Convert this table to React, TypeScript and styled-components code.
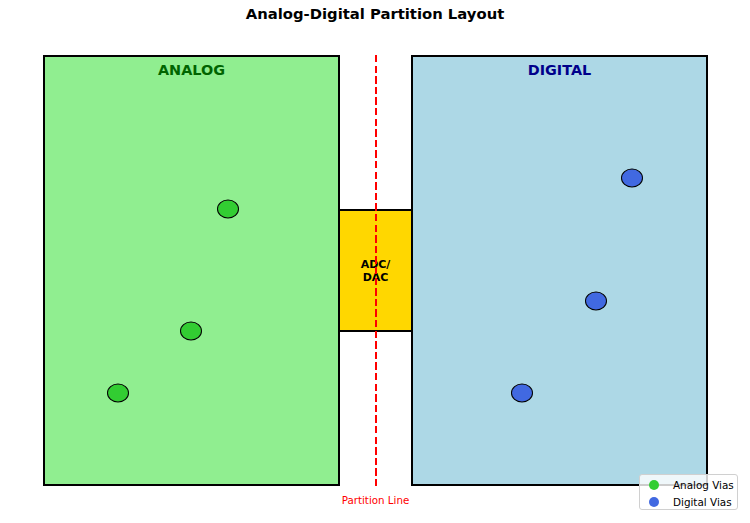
import React from 'react';
import styled, { createGlobalStyle } from 'styled-components';

const GlobalStyle = createGlobalStyle`
  html, body {
    margin: 0;
    padding: 0;
    background: #ffffff;
    font-family: 'DejaVu Sans', 'Liberation Sans', sans-serif;
  }
`;

const Page = styled.div`
  position: relative;
  width: 750px;
  height: 523px;
  display: flex;
  flex-direction: column;
  background: #ffffff;
  overflow: hidden;
`;

const Title = styled.h1`
  margin: 0;
  height: 28px;
  line-height: 28px;
  font-size: 14.8px;
  font-weight: bold;
  text-align: center;
  color: #000;
`;

const Board = styled.div`
  display: flex;
  margin: 27px 0 0 43px;
  height: 431px;
`;

const Panel = styled.div<{ $bg: string }>`
  position: relative;
  box-sizing: border-box;
  width: 297px;
  height: 100%;
  border: 2px solid #000;
  background: ${(p) => p.$bg};
  display: flex;
  flex-direction: column;
  align-items: center;
`;

const PanelLabel = styled.div<{ $color: string }>`
  padding-top: 4px;
  font-size: 14.4px;
  line-height: 18px;
  font-weight: bold;
  color: ${(p) => p.$color};
`;

const Via = styled.span<{ $fill: string }>`
  position: absolute;
  width: 22px;
  height: 19px;
  box-sizing: border-box;
  border: 1px solid #000;
  border-radius: 50%;
  background: ${(p) => p.$fill};
  transform: translate(-50%, -50%);
`;

const Gap = styled.div`
  position: relative;
  width: 71px;
  height: 100%;
  display: flex;
  flex-direction: column;
  justify-content: center;
`;

const Converter = styled.div`
  box-sizing: border-box;
  height: 123px;
  border-top: 2px solid #000;
  border-bottom: 2px solid #000;
  background: #ffd700;
  display: flex;
  align-items: center;
  justify-content: center;
  text-align: center;
  font-size: 11px;
  line-height: 13px;
  font-weight: bold;
  color: #000;
`;

const PartitionLine = styled.div`
  position: absolute;
  top: 0;
  bottom: 0;
  left: 50%;
  width: 2px;
  transform: translateX(-50%);
  background: repeating-linear-gradient(
    to bottom,
    #ff0000 0,
    #ff0000 7.4px,
    transparent 7.4px,
    transparent 10.6px
  );
`;

const Caption = styled.div`
  margin: 8px 0 0 43px;
  width: 665px;
  text-align: center;
  font-size: 10.3px;
  line-height: 12px;
  color: #ff0000;
`;

const Legend = styled.div`
  position: absolute;
  left: 639px;
  top: 474px;
  box-sizing: border-box;
  width: 99px;
  height: 36px;
  padding-top: 1px;
  border: 1px solid #d0d0d0;
  border-radius: 3px;
  background: rgba(255, 255, 255, 0.8);
`;

const LegendRow = styled.div`
  display: flex;
  align-items: center;
  height: 17px;
  padding-left: 9px;
  font-size: 10.4px;
  color: #000;
`;

const Dot = styled.span<{ $fill: string }>`
  width: 10px;
  height: 10px;
  border-radius: 50%;
  background: ${(p) => p.$fill};
  margin-right: 14px;
`;

const ANALOG_VIAS = [
  { x: 183, y: 152 },
  { x: 146, y: 274 },
  { x: 73, y: 336 },
];

const DIGITAL_VIAS = [
  { x: 219, y: 121 },
  { x: 183, y: 244 },
  { x: 109, y: 336 },
];

const App = () => (
  <>
    <GlobalStyle />
    <Page>
      <Title>Analog-Digital Partition Layout</Title>
      <Board>
        <Panel $bg="#90ee90">
          <PanelLabel $color="#006400">ANALOG</PanelLabel>
          {ANALOG_VIAS.map((v, i) => (
            <Via key={i} $fill="#32cd32" style={{ left: v.x, top: v.y }} />
          ))}
        </Panel>
        <Gap>
          <Converter>
            ADC/
            <br />
            DAC
          </Converter>
          <PartitionLine />
        </Gap>
        <Panel $bg="#add8e6">
          <PanelLabel $color="#00008b">DIGITAL</PanelLabel>
          {DIGITAL_VIAS.map((v, i) => (
            <Via key={i} $fill="#4169e1" style={{ left: v.x, top: v.y }} />
          ))}
        </Panel>
      </Board>
      <Caption>Partition Line</Caption>
      <Legend>
        <LegendRow>
          <Dot $fill="#32cd32" />
          Analog Vias
        </LegendRow>
        <LegendRow>
          <Dot $fill="#4169e1" />
          Digital Vias
        </LegendRow>
      </Legend>
    </Page>
  </>
);

export default App;
